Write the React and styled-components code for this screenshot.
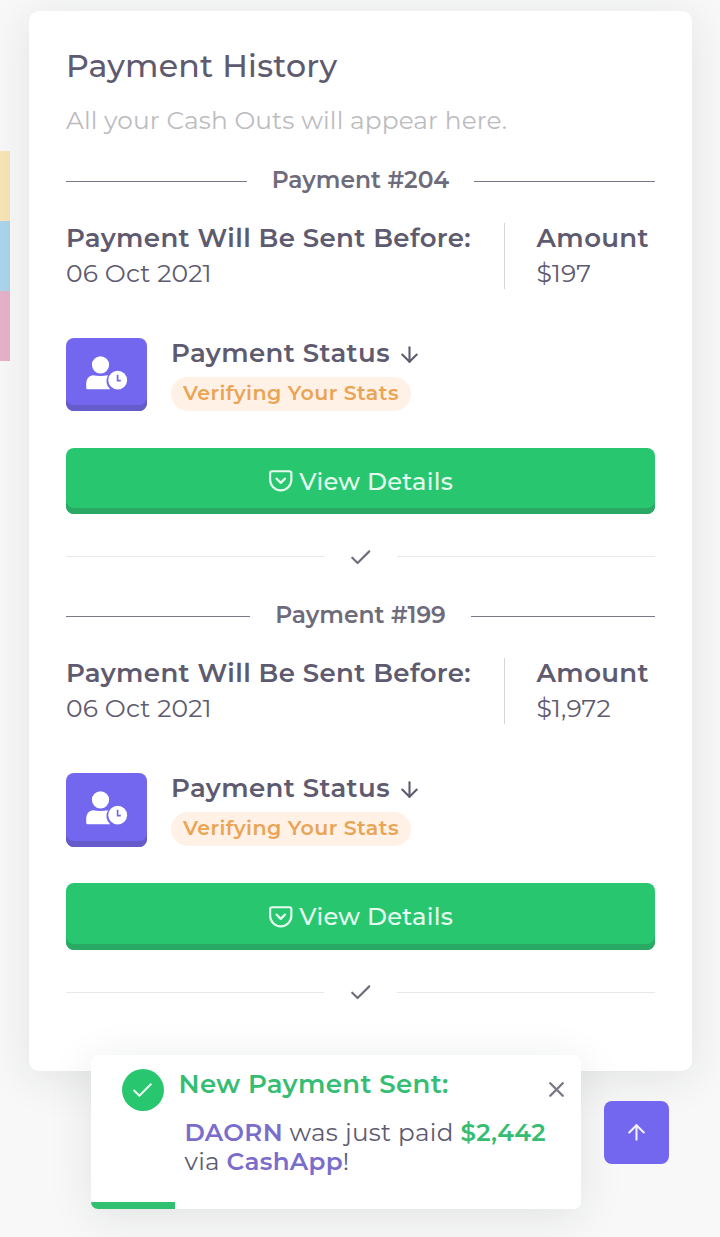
import React from "react"
import styled, { createGlobalStyle } from "styled-components"
import { FiArrowDown, FiArrowUp, FiCheck, FiPocket, FiX } from "react-icons/fi"

const payments = [
  { id: 204, date: "06 Oct 2021", amount: "$197", status: "Verifying Your Stats" },
  { id: 199, date: "06 Oct 2021", amount: "$1,972", status: "Verifying Your Stats" },
]

const stripes = ["#f7e5b5", "#abd5ea", "#e6b2c9"]

const UserClock = () => (
  <svg width="42" height="34" viewBox="0 0 42 34" fill="#fff">
    <circle cx="14.5" cy="8.8" r="8.6" />
    <path d="M6.7 19.2 Q14.5 20.6 22 19.2 A11.2 11.2 0 0 0 24.2 33.3 H1.8 Q0.2 33.3 0.2 31.7 V28 Q0.2 20.5 6.7 19.2 Z" />
    <circle cx="31.7" cy="24.2" r="9.4" />
    <path d="M31.6 18.8 V24.7 H34.8" fill="none" stroke="#7367f0" strokeWidth="1.7" />
  </svg>
)

const Payment = ({ payment }) => (
  <>
    <Divider>{`Payment #${payment.id}`}</Divider>
    <Details>
      <Sent>
        <Label>Payment Will Be Sent Before:</Label>
        <Value>{payment.date}</Value>
      </Sent>
      <Amount>
        <Label>Amount</Label>
        <Value>{payment.amount}</Value>
      </Amount>
    </Details>
    <Status>
      <StatusIcon>
        <UserClock />
      </StatusIcon>
      <StatusText>
        <StatusLabel>
          Payment Status <FiArrowDown size={25} />
        </StatusLabel>
        <Badge>{payment.status}</Badge>
      </StatusText>
    </Status>
    <Button>
      <FiPocket size={25.5} />
      View Details
    </Button>
    <Separator>
      <FiCheck size={25.5} />
    </Separator>
  </>
)

const App = () => (
  <>
    <GlobalStyle />
    <Page>
      <Stripes>
        {stripes.map((color) => (
          <Stripe key={color} $color={color} />
        ))}
      </Stripes>
      <Card>
        <Title>Payment History</Title>
        <Subtitle>All your Cash Outs will appear here.</Subtitle>
        {payments.map((p) => (
          <Payment key={p.id} payment={p} />
        ))}
      </Card>
      <Toast>
        <ToastIcon>
          <FiCheck size={25} />
        </ToastIcon>
        <ToastContent>
          <ToastTitle>New Payment Sent:</ToastTitle>
          <Message>
            <Name>DAORN</Name> was just paid <Paid>$2,442</Paid>
            <br />
            via <Name>CashApp</Name>!
          </Message>
        </ToastContent>
        <Close>
          <FiX size={25} strokeWidth={2.3} />
        </Close>
        <Progress />
      </Toast>
      <ScrollTop>
        <FiArrowUp size={25} />
      </ScrollTop>
    </Page>
  </>
)

const GlobalStyle = createGlobalStyle`
  * {
    box-sizing: border-box;
  }

  body {
    margin: 0;
    background: #f8f8f8;
    color: #5e5a70;
    font-family: Montserrat, Inter, sans-serif;
  }

  svg {
    display: block;
    flex-shrink: 0;
  }
`

const Page = styled.div`
  position: relative;
  display: flex;
  align-items: flex-start;
  width: 720px;
  height: 1237px;
  overflow: hidden;
`

const Stripes = styled.div`
  width: 10px;
  margin-top: 151px;
`

const Stripe = styled.div`
  height: 70px;
  background: ${({ $color }) => $color};
`

const Card = styled.section`
  width: 663px;
  height: 1060px;
  margin: 11px 0 0 19px;
  padding: 35px 37px;
  background: #fff;
  border-radius: 10px;
  box-shadow: 0 7px 44px rgba(34, 41, 47, 0.1);
`

const Title = styled.h1`
  margin: 0;
  font-size: 31.6px;
  font-weight: 500;
  line-height: 39px;
  letter-spacing: 0.25px;
  white-space: nowrap;
`

const Subtitle = styled.p`
  margin: 18px 0 26px;
  color: #bcbcc0;
  font-size: 24.8px;
  font-weight: 400;
  line-height: 34px;
  letter-spacing: 0.12px;
  white-space: nowrap;
`

const Divider = styled.div`
  display: flex;
  align-items: center;
  gap: 25px;
  height: 34px;
  padding-bottom: 2px;
  color: #6e6b7b;
  font-size: 23.4px;
  font-weight: 600;
  white-space: nowrap;

  &::before,
  &::after {
    content: "";
    flex: 1;
    height: 1px;
    margin-top: 4px;
    background: #7b788a;
  }
`

const Details = styled.div`
  display: flex;
  align-items: center;
  margin-top: 24px;
  line-height: 35px;
  white-space: nowrap;
`

const Sent = styled.div`
  width: 438px;
`

const Amount = styled.div`
  display: flex;
  flex-direction: column;
  justify-content: center;
  height: 66px;
  padding-left: 31.5px;
  border-left: 1px solid #d5d5da;
`

const Label = styled.div`
  font-size: 26px;
  font-weight: 600;
  letter-spacing: 0.37px;
`

const Value = styled.div`
  font-size: 25px;
  letter-spacing: 0.15px;
`

const Status = styled.div`
  display: flex;
  gap: 24px;
  margin-top: 47px;
`

const StatusIcon = styled.div`
  display: flex;
  justify-content: center;
  width: 81px;
  height: 73.2px;
  padding-top: 18px;
  background: #7367f0;
  border-radius: 8px;
  box-shadow: inset 0 -6px 0 #655bcb;
`

const StatusText = styled.div`
  display: flex;
  flex-direction: column;
  align-items: flex-start;
`

const StatusLabel = styled.div`
  display: flex;
  gap: 7px;
  height: 31px;
  font-size: 26px;
  font-weight: 600;
  line-height: 30px;
  letter-spacing: 0.4px;

  svg {
    margin-top: 4px;
  }
`

const Badge = styled.span`
  height: 34px;
  margin-top: 8px;
  padding: 0 12px;
  background: #fff1e5;
  border-radius: 17px;
  color: #e9a455;
  font-size: 20.6px;
  font-weight: 600;
  line-height: 32px;
  letter-spacing: 0.4px;
  white-space: nowrap;
`

const Button = styled.button`
  display: flex;
  align-items: center;
  justify-content: center;
  gap: 6px;
  width: 100%;
  height: 66.2px;
  margin-top: 36.8px;
  padding: 0;
  background: #28c76f;
  border: 0;
  border-radius: 8px;
  box-shadow: inset 0 -6px 0 #29a963;
  color: #e5fbef;
  font-family: inherit;
  font-size: 24.2px;
  font-weight: 500;
  letter-spacing: 0.25px;
`

const Separator = styled.div`
  display: flex;
  align-items: center;
  gap: 23.5px;
  height: 35px;
  margin: 25px 0 24.2px;
  color: #6e6b7b;

  &::before,
  &::after {
    content: "";
    flex: 1;
    height: 1px;
    background: #e8e8eb;
  }

  svg {
    margin-top: 2px;
  }
`

const Toast = styled.div`
  position: absolute;
  top: 1055px;
  left: 91px;
  display: flex;
  width: 490px;
  height: 154px;
  padding: 14px 12px 0 31px;
  overflow: hidden;
  background: #fff;
  border-radius: 7px;
  box-shadow: 0 7px 44px rgba(34, 41, 47, 0.1);
`

const ToastIcon = styled.div`
  display: flex;
  align-items: center;
  justify-content: center;
  width: 42px;
  height: 42px;
  padding-right: 1px;
  background: #28c76f;
  border-radius: 50%;
  color: #e5fbef;
`

const ToastContent = styled.div`
  flex: 1;
  padding-left: 14.5px;
  white-space: nowrap;
`

const ToastTitle = styled.div`
  color: #35bd73;
  font-size: 26px;
  font-weight: 600;
  line-height: 30px;
  letter-spacing: 0.35px;
`

const Message = styled.div`
  margin: 19px 0 0 6px;
  font-size: 24.6px;
  line-height: 29px;
  letter-spacing: 0.3px;
`

const Name = styled.span`
  color: #7b6dcb;
  font-weight: 600;
`

const Paid = styled.span`
  color: #35bd73;
  font-weight: 600;
`

const Close = styled.div`
  position: absolute;
  top: 22px;
  right: 12px;
  color: #7b7886;
`

const Progress = styled.div`
  position: absolute;
  bottom: 0;
  left: 0;
  width: 84px;
  height: 7px;
  background: #31c072;
`

const ScrollTop = styled.div`
  position: absolute;
  top: 1101px;
  left: 604px;
  display: flex;
  align-items: center;
  justify-content: center;
  width: 65px;
  height: 63px;
  background: #7367f0;
  border-radius: 8px;
  color: #f3f1ff;
`

export default App
